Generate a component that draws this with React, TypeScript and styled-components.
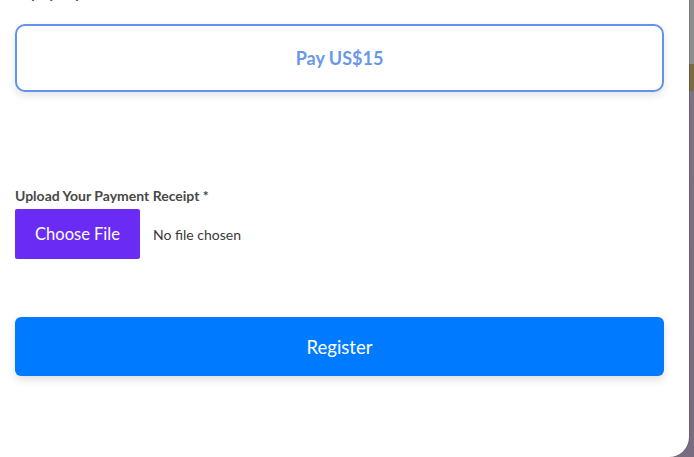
import React from "react";
import styled, { createGlobalStyle } from "styled-components";

const Global = createGlobalStyle`
  html, body { margin: 0; padding: 0; }
  body { font-family: Lato, "Open Sans", sans-serif; overflow: hidden; }
`;

const Backdrop = styled.div`
  width: 694px;
  height: 457px;
  overflow: hidden;
  display: flex;
  background: linear-gradient(
    to bottom,
    #8e8e8e 0,
    #8e8e8e 64px,
    #7b6a43 64px,
    #7b6a43 91px,
    #7e7183 91px,
    #7a6c80 100%
  );
`;

const Modal = styled.div`
  width: 689px;
  height: 457px;
  box-sizing: border-box;
  background: #ffffff;
  border-bottom-right-radius: 20px;
  box-shadow: 1px 0 0 rgba(0, 0, 0, 0.15);
  padding: 0 25px 0 15px;
  display: flex;
  flex-direction: column;
`;

const Label = styled.label<{ $cut?: boolean }>`
  display: block;
  font-size: 14px;
  line-height: 18px;
  font-weight: 700;
  color: #484848;
  margin-top: ${(p) => (p.$cut ? "-15px" : "0")};
`;

const PayButton = styled.button`
  margin-top: 21px;
  height: 68px;
  width: 100%;
  background: #ffffff;
  border: 2px solid #6294ea;
  border-radius: 10px;
  box-shadow: 0 4px 8px rgba(0, 0, 0, 0.1);
  color: #6a98e8;
  font-family: inherit;
  font-size: 18px;
  font-weight: 700;
  cursor: pointer;
`;

const Field = styled.div`
  margin-top: 95px;
  display: flex;
  flex-direction: column;
  gap: 4px;
`;

const FileRow = styled.div`
  display: flex;
  align-items: center;
  gap: 13px;
`;

const ChooseButton = styled.button`
  width: 125px;
  height: 50px;
  background: #6a2cf5;
  color: #ffffff;
  border: none;
  border-radius: 2px;
  font-family: inherit;
  font-size: 16.5px;
  cursor: pointer;
`;

const FileName = styled.span`
  font-size: 14px;
  color: #3a3a3a;
`;

const RegisterButton = styled.button`
  margin-top: 58px;
  height: 59px;
  width: 100%;
  background: #007bff;
  color: #ffffff;
  border: none;
  border-radius: 6px;
  box-shadow: 0 4px 8px rgba(0, 0, 0, 0.12);
  font-family: inherit;
  font-size: 18.5px;
  cursor: pointer;
`;

export default function App() {
  return (
    <>
      <Global />
      <Backdrop>
        <Modal>
          <Label $cut>Pay by PayPal *</Label>
          <PayButton>Pay US$15</PayButton>
          <Field>
            <Label>Upload Your Payment Receipt *</Label>
            <FileRow>
              <ChooseButton>Choose File</ChooseButton>
              <FileName>No file chosen</FileName>
            </FileRow>
          </Field>
          <RegisterButton>Register</RegisterButton>
        </Modal>
      </Backdrop>
    </>
  );
}
